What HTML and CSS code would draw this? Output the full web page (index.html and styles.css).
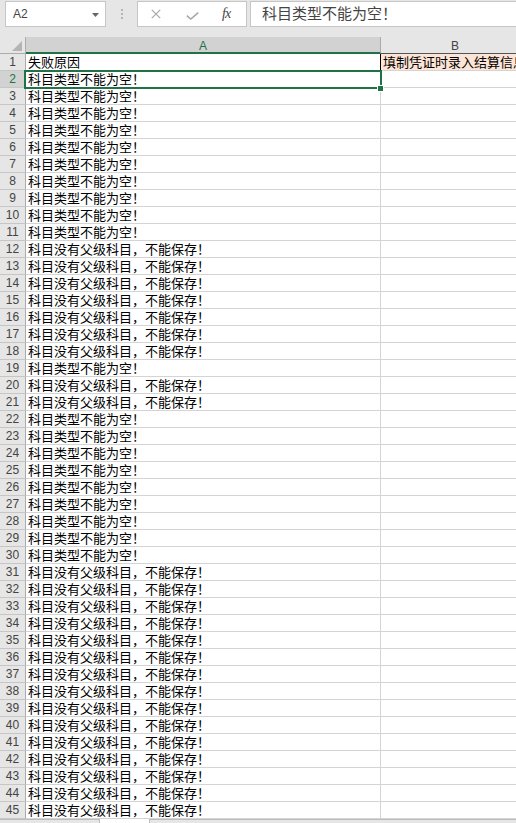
FILE: index.html
```html
<!DOCTYPE html>
<html lang="zh">
<head>
<meta charset="utf-8">
<title>Sheet</title>
<link rel="stylesheet" href="styles.css">
</head>
<body>
<div class="formula-bar">
  <div class="namebox"><span>A2</span><svg viewBox="0 0 7 4" class="nb-arrow"><path d="M0 0 L7 0 L3.5 4 Z" fill="#666"/></svg></div>
  <div class="divider"><svg viewBox="0 0 2 10" class="dots"><rect x="0" y="0" width="2" height="2" fill="#b4b4b4"/><rect x="0" y="4" width="2" height="2" fill="#b4b4b4"/><rect x="0" y="8" width="2" height="2" fill="#b4b4b4"/></svg></div>
  <div class="fbtns">
    <svg viewBox="0 0 10 10" class="ic-x"><path d="M0.8 0.8 L9.2 9.2 M9.2 0.8 L0.8 9.2" stroke="#a8a8a8" stroke-width="1.2" fill="none"/></svg>
    <svg viewBox="0 0 13 8" class="ic-ok"><path d="M0.8 3.6 L4.8 7 L12.3 0.6" stroke="#a8a8a8" stroke-width="1.6" fill="none"/></svg>
    <span class="fx">fx</span>
  </div>
  <div class="finput">科目类型不能为空！</div>
</div>
<div class="sheet">
  <div class="grid">
    <div class="corner"><svg viewBox="0 0 10 10" class="tri"><path d="M10 0 L10 10 L0 10 Z" fill="#b4b4b4"/></svg></div>
    <div class="ch ch-sel">A</div>
    <div class="ch ch-b">B</div>

    <div class="rh">1</div><div class="c c-a1">失败原因</div><div class="c c-b1">填制凭证时录入结算信息</div>
    <div class="rh rh-sel">2</div><div class="c">科目类型不能为空！</div><div class="c"></div>
    <div class="rh">3</div><div class="c">科目类型不能为空！</div><div class="c"></div>
    <div class="rh">4</div><div class="c">科目类型不能为空！</div><div class="c"></div>
    <div class="rh">5</div><div class="c">科目类型不能为空！</div><div class="c"></div>
    <div class="rh">6</div><div class="c">科目类型不能为空！</div><div class="c"></div>
    <div class="rh">7</div><div class="c">科目类型不能为空！</div><div class="c"></div>
    <div class="rh">8</div><div class="c">科目类型不能为空！</div><div class="c"></div>
    <div class="rh">9</div><div class="c">科目类型不能为空！</div><div class="c"></div>
    <div class="rh">10</div><div class="c">科目类型不能为空！</div><div class="c"></div>
    <div class="rh">11</div><div class="c">科目类型不能为空！</div><div class="c"></div>
    <div class="rh">12</div><div class="c">科目没有父级科目，不能保存！</div><div class="c"></div>
    <div class="rh">13</div><div class="c">科目没有父级科目，不能保存！</div><div class="c"></div>
    <div class="rh">14</div><div class="c">科目没有父级科目，不能保存！</div><div class="c"></div>
    <div class="rh">15</div><div class="c">科目没有父级科目，不能保存！</div><div class="c"></div>
    <div class="rh">16</div><div class="c">科目没有父级科目，不能保存！</div><div class="c"></div>
    <div class="rh">17</div><div class="c">科目没有父级科目，不能保存！</div><div class="c"></div>
    <div class="rh">18</div><div class="c">科目没有父级科目，不能保存！</div><div class="c"></div>
    <div class="rh">19</div><div class="c">科目类型不能为空！</div><div class="c"></div>
    <div class="rh">20</div><div class="c">科目没有父级科目，不能保存！</div><div class="c"></div>
    <div class="rh">21</div><div class="c">科目没有父级科目，不能保存！</div><div class="c"></div>
    <div class="rh">22</div><div class="c">科目类型不能为空！</div><div class="c"></div>
    <div class="rh">23</div><div class="c">科目类型不能为空！</div><div class="c"></div>
    <div class="rh">24</div><div class="c">科目类型不能为空！</div><div class="c"></div>
    <div class="rh">25</div><div class="c">科目类型不能为空！</div><div class="c"></div>
    <div class="rh">26</div><div class="c">科目类型不能为空！</div><div class="c"></div>
    <div class="rh">27</div><div class="c">科目类型不能为空！</div><div class="c"></div>
    <div class="rh">28</div><div class="c">科目类型不能为空！</div><div class="c"></div>
    <div class="rh">29</div><div class="c">科目类型不能为空！</div><div class="c"></div>
    <div class="rh">30</div><div class="c">科目类型不能为空！</div><div class="c"></div>
    <div class="rh">31</div><div class="c">科目没有父级科目，不能保存！</div><div class="c"></div>
    <div class="rh">32</div><div class="c">科目没有父级科目，不能保存！</div><div class="c"></div>
    <div class="rh">33</div><div class="c">科目没有父级科目，不能保存！</div><div class="c"></div>
    <div class="rh">34</div><div class="c">科目没有父级科目，不能保存！</div><div class="c"></div>
    <div class="rh">35</div><div class="c">科目没有父级科目，不能保存！</div><div class="c"></div>
    <div class="rh">36</div><div class="c">科目没有父级科目，不能保存！</div><div class="c"></div>
    <div class="rh">37</div><div class="c">科目没有父级科目，不能保存！</div><div class="c"></div>
    <div class="rh">38</div><div class="c">科目没有父级科目，不能保存！</div><div class="c"></div>
    <div class="rh">39</div><div class="c">科目没有父级科目，不能保存！</div><div class="c"></div>
    <div class="rh">40</div><div class="c">科目没有父级科目，不能保存！</div><div class="c"></div>
    <div class="rh">41</div><div class="c">科目没有父级科目，不能保存！</div><div class="c"></div>
    <div class="rh">42</div><div class="c">科目没有父级科目，不能保存！</div><div class="c"></div>
    <div class="rh">43</div><div class="c">科目没有父级科目，不能保存！</div><div class="c"></div>
    <div class="rh">44</div><div class="c">科目没有父级科目，不能保存！</div><div class="c"></div>
    <div class="rh">45</div><div class="c">科目没有父级科目，不能保存！</div><div class="c"></div>
  </div>
  <div class="selection"><span class="handle"></span></div>
</div>
<div class="tabbar"><div class="tb-left"></div><div class="tb-mid"></div><div class="tb-right"></div></div>
</body>
</html>
```
FILE: styles.css
```css
* { box-sizing: border-box; }
html, body { margin: 0; padding: 0; }
body {
  width: 516px;
  height: 823px;
  overflow: hidden;
  background: #e6e6e6;
  font-family: "Liberation Sans", Arial, sans-serif;
}

/* formula bar */
.formula-bar {
  display: flex;
  align-items: flex-start;
  height: 37px;
  padding: 1px 0 0 5px;
  background: #e6e6e6;
}
.namebox {
  width: 101px;
  height: 26px;
  background: #fff;
  border: 1px solid #c6c6c6;
  display: flex;
  align-items: center;
  justify-content: space-between;
  padding: 0 6px 0 7px;
  font-size: 12px;
  color: #444;
}
.nb-arrow { width: 7px; height: 4px; margin-top: 1px; }
.divider {
  width: 31px;
  height: 26px;
  display: flex;
  align-items: center;
  justify-content: center;
}
.dots { width: 2px; height: 10px; }
.fbtns {
  width: 110px;
  height: 26px;
  background: #fff;
  border: 1px solid #c6c6c6;
  display: flex;
  align-items: center;
}
.ic-x { width: 10px; height: 10px; margin-left: 13px; }
.ic-ok { width: 13px; height: 8px; margin-left: 25px; margin-top: 3px; }
.fx {
  margin-left: 23px;
  font-family: "Liberation Serif", serif;
  font-style: italic;
  font-size: 14px;
  color: #444;
  letter-spacing: -1px;
}
.finput {
  flex: 1;
  margin-left: 3px;
  height: 26px;
  background: #fff;
  border: 1px solid #c6c6c6;
  border-right: none;
  padding-left: 11px;
  font-family: "Noto Sans CJK SC", sans-serif;
  font-size: 15px;
  line-height: 22px;
  color: #444;
  white-space: nowrap;
}

/* sheet */
.sheet {
  position: relative;
  background: #fff;
  height: 782px;
  overflow: hidden;
}
.grid {
  display: grid;
  grid-template-columns: 26px 355px 149px;
  grid-auto-rows: 17px;
}
.corner {
  background: #e6e6e6;
  border-right: 1px solid #ababab;
  border-bottom: 1px solid #ababab;
  display: flex;
  justify-content: flex-end;
  align-items: flex-end;
  padding: 0 3px 2px 0;
}
.tri { width: 10px; height: 10px; }
.ch {
  background: #e6e6e6;
  border-right: 1px solid #ababab;
  border-bottom: 1px solid #ababab;
  font-size: 12px;
  color: #444;
  text-align: center;
  padding-top: 2px;
  line-height: 14px;
}
.ch-sel {
  background: #d2d2d2;
  color: #217346;
  border-bottom: 2px solid #217346;
}
.ch-b { border-bottom-color: #555; }
.rh {
  background: #e6e6e6;
  border-right: 1px solid #ababab;
  border-bottom: 1px solid #c6c6c6;
  text-align: center;
  font-size: 12px;
  color: #444;
  line-height: 16px;
}
.rh-sel {
  background: #d2d2d2;
  color: #217346;
}
.c {
  border-right: 1px solid #d4d4d4;
  border-bottom: 1px solid #d4d4d4;
  font-family: "Noto Sans CJK SC", sans-serif;
  font-size: 13px;
  line-height: 16px;
  color: #000;
  padding-left: 2px;
  white-space: nowrap;
}
.c-a1 { border-right-color: #000; }
.c-b1 { background: #fce4d6; }

.selection {
  position: absolute;
  left: 24px;
  top: 33px;
  width: 358px;
  height: 19px;
  border: 2px solid #217346;
}
.handle {
  position: absolute;
  right: -3px;
  bottom: -4px;
  width: 5px;
  height: 5px;
  background: #217346;
  box-shadow: 0 0 0 1px #fff;
}

/* bottom tab strip */
.tabbar {
  display: flex;
  height: 4px;
}
.tb-left { width: 100px; background: #e6e6e6; border-top: 1px solid #bdbdbd; border-right: 1px solid #bdbdbd; }
.tb-mid { width: 49px; background: #fff; }
.tb-right { flex: 1; background: #e6e6e6; border-top: 1px solid #bdbdbd; border-left: 1px solid #bdbdbd; }
```
